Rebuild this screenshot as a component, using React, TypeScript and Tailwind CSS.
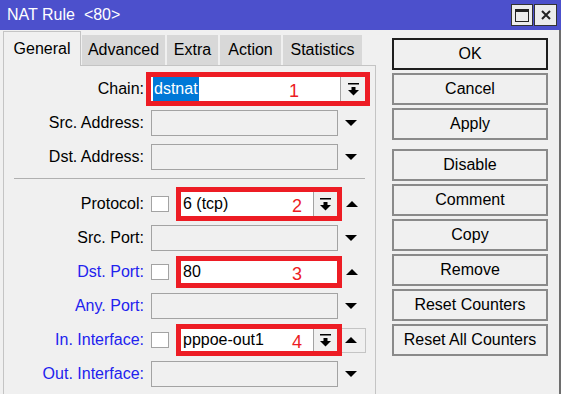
import React from "react";

function Tri({ up }: { up?: boolean }) {
  return (
    <svg width="12" height="6" viewBox="0 0 12 6">
      {up ? <polygon points="0,6 12,6 6,0" fill="#000" /> : <polygon points="0,0 12,0 6,6" fill="#000" />}
    </svg>
  );
}

function DropIcon() {
  return (
    <svg width="11" height="13" viewBox="0 0 11 13">
      <rect x="0" y="0" width="11" height="1.5" fill="#000" />
      <rect x="3.5" y="4" width="4" height="3" fill="#000" />
      <polygon points="0,7 11,7 5.5,12.5" fill="#000" />
    </svg>
  );
}

function Label({ children, blue }: { children: React.ReactNode; blue?: boolean }) {
  return (
    <div className={`w-[140px] shrink-0 text-right whitespace-nowrap ${blue ? "text-[#2222ee]" : "text-black"}`}>
      {children}
    </div>
  );
}

function Check() {
  return <div className="ml-[7px] w-[18px] h-[16px] shrink-0 bg-white border border-[#a3a3a3]" />;
}

function Num({ n, left }: { n: string; left: string }) {
  return (
    <span className={`absolute ${left} top-0 bottom-0 flex items-center pt-[3px] text-[18px] leading-none text-[#ec1c24]`}>
      {n}
    </span>
  );
}

function DropBtn() {
  return (
    <div className="w-[24px] shrink-0 border-l border-[#a3a3a3] bg-[#f0f0f0] flex items-center justify-center">
      <DropIcon />
    </div>
  );
}

function PlainRow({ label, blue }: { label: string; blue?: boolean }) {
  return (
    <div className="flex h-[34px] items-center">
      <Label blue={blue}>{label}</Label>
      <div className="ml-[7px] w-[187px] h-[26px] shrink-0 border border-[#a3a3a3]" />
      <div className="ml-[1px] w-[24px] flex justify-center">
        <Tri />
      </div>
    </div>
  );
}

function Btn({ children, ok, extra }: { children: React.ReactNode; ok?: boolean; extra?: string }) {
  return (
    <div
      className={`h-[32px] w-[156px] flex items-center justify-center border-2 ${
        ok ? "border-[#1e1e1e]" : "border-[#8a8a8a]"
      } ${extra ?? ""}`}
    >
      {children}
    </div>
  );
}

export default function App() {
  return (
    <div className="w-[561px] h-[394px] overflow-hidden bg-[#f0f0f0] font-['Liberation_Sans',Arial,sans-serif] text-[16px] text-black">
      {/* Title bar */}
      <div className="h-[30px] bg-[#4c50cc] flex items-center pl-[7px] text-white">
        <span>NAT Rule</span>
        <span className="ml-[9px]">&lt;80&gt;</span>
        <div className="ml-auto mr-[4px] flex gap-[1px]">
          <div className="w-[22px] h-[22px] border border-[#333] bg-[#ececec] flex items-center justify-center">
            <svg width="14" height="13" viewBox="0 0 14 13">
              <rect x="0.5" y="0.5" width="13" height="12" fill="none" stroke="#222" />
              <rect x="0" y="0" width="14" height="3" fill="#222" />
            </svg>
          </div>
          <div className="w-[23px] h-[22px] border border-[#333] bg-[#ececec] flex items-center justify-center">
            <svg width="10" height="10" viewBox="0 0 10 10">
              <path d="M1 1L9 9M9 1L1 9" stroke="#222" strokeWidth="2" />
            </svg>
          </div>
        </div>
      </div>

      {/* Body */}
      <div className="flex h-[364px] border-r-2 border-[#6e6e6e]">
        {/* Left: tabs + panel */}
        <div className="w-[376px] shrink-0 pl-[3px] flex flex-col">
          <div className="flex items-start h-[35px]">
            <div className="relative z-10 mt-[1px] h-[35px] w-[78px] bg-[#f0f0f0] border-l border-t border-r border-[#c4c4c4] flex items-center justify-center">
              General
            </div>
            <div className="ml-[1px] mt-[5px] h-[30px] w-[83px] bg-[#d8d8d8] flex items-center justify-center">Advanced</div>
            <div className="ml-[2px] mt-[5px] h-[30px] w-[51px] bg-[#d8d8d8] flex items-center justify-center">Extra</div>
            <div className="ml-[2px] mt-[5px] h-[30px] w-[61px] bg-[#d8d8d8] flex items-center justify-center">Action</div>
            <div className="ml-[2px] mt-[5px] h-[30px] w-[79px] bg-[#d8d8d8] flex items-center justify-center">Statistics</div>
          </div>
          <div className="w-[373px] flex-1 border-l border-t border-r border-[#c4c4c4] pt-[6px]">
            {/* Chain */}
            <div className="flex h-[34px] items-center">
              <Label>Chain:</Label>
              <div className="ml-[2px] w-[224px] h-[34px] shrink-0 border-[5px] border-[#ed1c24] flex">
                <div className="relative flex-1 bg-white flex items-stretch pl-[2px]">
                  <span className="bg-[#0078d7] text-white px-[1px] flex items-center">dstnat</span>
                  <Num n="1" left="left-[138px]" />
                </div>
                <div className="w-[25px] shrink-0 border-l border-[#a3a3a3] bg-[#f0f0f0] flex items-center justify-center">
                  <DropIcon />
                </div>
              </div>
            </div>
            <PlainRow label="Src. Address:" />
            <PlainRow label="Dst. Address:" />
            <div className="mx-[10px] mt-[4px] mb-[8px] border-t border-[#b0b0b0]" />
            {/* Protocol */}
            <div className="flex h-[34px] items-center">
              <Label>Protocol:</Label>
              <Check />
              <div className="ml-[7px] w-[166px] h-[34px] shrink-0 border-[5px] border-[#ed1c24] flex">
                <div className="relative flex-1 bg-white flex items-center pl-[2px]">
                  6 (tcp)
                  <Num n="2" left="left-[111px]" />
                </div>
                <DropBtn />
              </div>
              <div className="w-[24px] pl-[4px] flex">
                <Tri up />
              </div>
            </div>
            <PlainRow label="Src. Port:" />
            {/* Dst Port */}
            <div className="flex h-[34px] items-center">
              <Label blue>Dst. Port:</Label>
              <Check />
              <div className="ml-[7px] w-[166px] h-[32px] shrink-0 border-[5px] border-[#ed1c24] flex">
                <div className="relative flex-1 bg-white flex items-center pl-[2px]">
                  80
                  <Num n="3" left="left-[111px]" />
                </div>
              </div>
              <div className="w-[24px] pl-[4px] flex">
                <Tri up />
              </div>
            </div>
            <PlainRow label="Any. Port:" blue />
            {/* In Interface */}
            <div className="flex h-[34px] items-center">
              <Label blue>In. Interface:</Label>
              <Check />
              <div className="ml-[7px] w-[166px] h-[32px] shrink-0 border-[5px] border-[#ed1c24] flex">
                <div className="relative flex-1 bg-white flex items-center pl-[2px]">
                  pppoe-out1
                  <Num n="4" left="left-[111px]" />
                </div>
                <DropBtn />
              </div>
              <div className="w-[24px] h-[25px] pl-[3px] flex items-center border-t border-r border-b border-[#c4c4c4]">
                <Tri up />
              </div>
            </div>
            <PlainRow label="Out. Interface:" blue />
          </div>
        </div>

        {/* Right buttons */}
        <div className="ml-[16px] pt-[8px] flex flex-col gap-[3px]">
          <Btn ok>OK</Btn>
          <Btn>Cancel</Btn>
          <Btn>Apply</Btn>
          <Btn extra="mt-[6px]">Disable</Btn>
          <Btn>Comment</Btn>
          <Btn>Copy</Btn>
          <Btn>Remove</Btn>
          <Btn>Reset Counters</Btn>
          <Btn>Reset All Counters</Btn>
        </div>
      </div>
    </div>
  );
}
